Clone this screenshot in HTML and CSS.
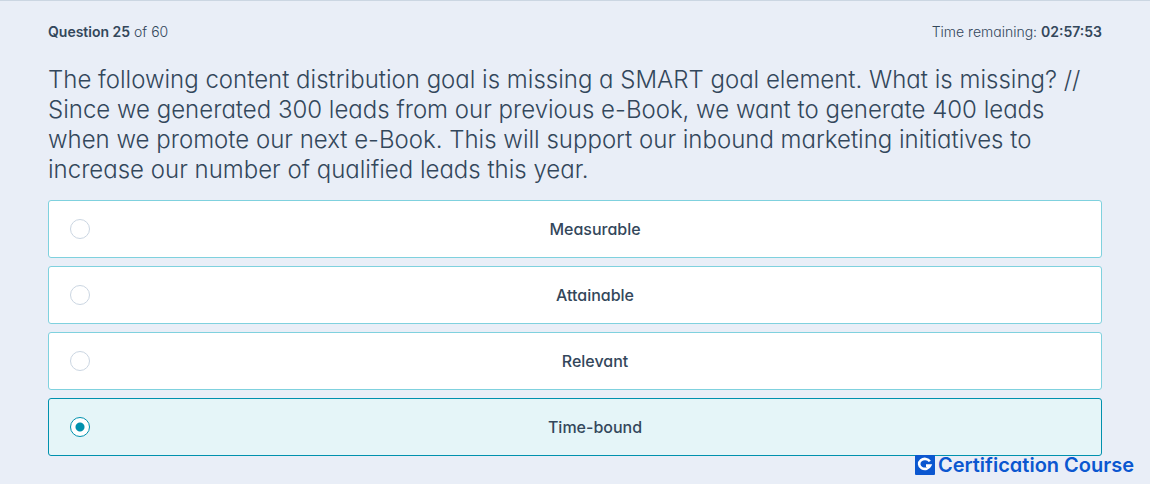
FILE: index.html
```html
<!DOCTYPE html>
<html lang="en">
<head>
  <meta charset="utf-8">
  <meta name="viewport" content="width=device-width, initial-scale=1">
  <title>Question 25 of 60</title>
  <link rel="stylesheet" href="styles.css">
</head>

<body>
  <main class="exam">
    <header class="status">
      <div><strong>Question 25</strong> of 60</div>
      <div>Time remaining: <strong>02:57:53</strong></div>
    </header>

    <form>
      <fieldset class="answers">
        <legend class="question">The following content distribution goal is missing a SMART goal element. What is missing? // Since we generated 300 leads from our previous e-Book, we want to generate 400 leads when we promote our next e-Book. This will support our inbound marketing initiatives to increase our number of qualified leads this year.</legend>
        <label class="answer">
          <input type="radio" name="answer" value="measurable">
          <span>Measurable</span>
        </label>
        <label class="answer">
          <input type="radio" name="answer" value="attainable">
          <span>Attainable</span>
        </label>
        <label class="answer">
          <input type="radio" name="answer" value="relevant">
          <span>Relevant</span>
        </label>
        <label class="answer">
          <input type="radio" name="answer" value="time-bound" checked>
          <span>Time-bound</span>
        </label>
      </fieldset>
    </form>
  </main>

  <div class="brand">
    <svg width="20" height="20" viewBox="0 0 20 20" aria-hidden="true">
      <rect width="20" height="20" rx="1" fill="#0b57d0"/>
      <path d="M14.8 6.4A5.7 5 0 1 0 15.2 10.6H11" fill="none" stroke="#fff" stroke-width="2.6"/>
    </svg>
    <span>Certification Course</span>
  </div>
</body>
</html>
```

FILE: styles.css
```css
* {
  box-sizing: border-box;
}

body {
  margin: 0;
  min-height: 100vh;
  border-top: 1px solid #cbd6e2;
  background: #e9eef7;
  color: #33475b;
  font-family: Inter, "Open Sans", sans-serif;
  font-feature-settings: "cv11";
}

.exam {
  padding: 19px 48px 28px;
}

.status {
  display: flex;
  justify-content: space-between;
  font-size: 14px;
  line-height: 24px;
  font-weight: 300;
}

.status strong {
  font-weight: 600;
}

.answers {
  display: flex;
  flex-direction: column;
  gap: 8px;
  min-width: 0;
  margin: 21px 0 0;
  padding: 0;
  border: 0;
}

.question {
  padding: 0 0 15px;
  font-size: 24px;
  line-height: 30px;
  font-weight: 300;
}

.answer {
  display: flex;
  align-items: center;
  gap: 20px;
  min-height: 58px;
  padding: 0 21px;
  border: 1px solid #7fd1de;
  border-radius: 3px;
  background: #fff;
  font-size: 16px;
  font-weight: 500;
  cursor: pointer;
}

.answer span {
  flex: 1;
  text-align: center;
}

.answer input {
  appearance: none;
  width: 20px;
  height: 20px;
  margin: 0;
  border: 1px solid #cbd6e2;
  border-radius: 50%;
  background: #fff;
}

.answer:has(input:checked) {
  border-color: #0091ae;
  background: #e5f5f8;
}

.answer input:checked {
  border-color: #0091ae;
  background: radial-gradient(circle, #0091ae 4px, #fff 5px);
}

/* watermark over the bottom corner */
.brand {
  position: absolute;
  right: 16px;
  bottom: 9px;
  display: flex;
  align-items: center;
  gap: 3px;
  color: #0b57d0;
  font-size: 20px;
  line-height: 20px;
  font-weight: 600;
}
```
